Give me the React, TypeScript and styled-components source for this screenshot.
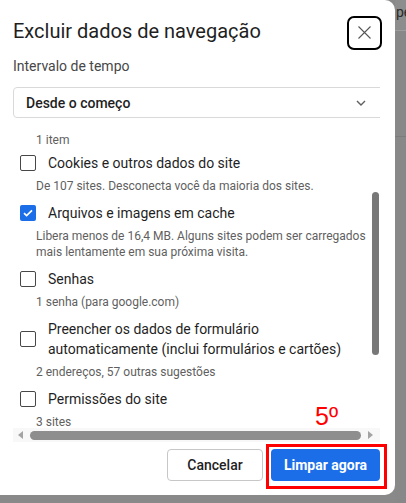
import React from 'react';
import styled, { createGlobalStyle } from 'styled-components';

type Entry = { label: string[]; hint: string[]; checked?: boolean };

const ENTRIES: Entry[] = [
  { label: ['Cookies e outros dados do site'], hint: ['De 107 sites. Desconecta você da maioria dos sites.'] },
  {
    label: ['Arquivos e imagens em cache'],
    hint: ['Libera menos de 16,4 MB. Alguns sites podem ser carregados', 'mais lentamente em sua próxima visita.'],
    checked: true,
  },
  { label: ['Senhas'], hint: ['1 senha (para google.com)'] },
  {
    label: ['Preencher os dados de formulário', 'automaticamente (inclui formulários e cartões)'],
    hint: ['2 endereços, 57 outras sugestões'],
  },
  { label: ['Permissões do site'], hint: ['3 sites'] },
];

const lines = (parts: string[]) =>
  parts.map((p, i) => (
    <React.Fragment key={i}>
      {i > 0 && <br />}
      {p}
    </React.Fragment>
  ));

const App: React.FC = () => {
  return (
    <Screen>
      <GlobalStyle />
      <Dialog>
        <Header>
          <Title>Excluir dados de navegação</Title>
          <CloseButton aria-label="Fechar">
            <svg width="13" height="13" viewBox="0 0 13 13">
              <path d="M0.5 0.5L12.5 12.5M12.5 0.5L0.5 12.5" stroke="#555" strokeWidth="1.1" fill="none" />
            </svg>
          </CloseButton>
        </Header>
        <RangeLabel>Intervalo de tempo</RangeLabel>
        <Frame>
          <Select>
            <SelectText>Desde o começo</SelectText>
            <svg width="10" height="6" viewBox="0 0 10 6">
              <path d="M1 1l4 4 4-4" stroke="#5f5f5f" strokeWidth="1.4" fill="none" />
            </svg>
          </Select>
          <ListArea>
            <ListViewport>
              <ScrollContent $offset={8}>
                <Hint>1 item</Hint>
                {ENTRIES.map((e, i) => (
                  <Item key={i}>
                    <Row>
                      <Box $checked={!!e.checked}>
                        {e.checked && (
                          <svg width="10" height="8" viewBox="0 0 10 8">
                            <path d="M1 4.2l2.6 2.4L9 1.3" stroke="#fff" strokeWidth="1.7" fill="none" />
                          </svg>
                        )}
                      </Box>
                      <Label>{lines(e.label)}</Label>
                    </Row>
                    <Hint>{lines(e.hint)}</Hint>
                  </Item>
                ))}
              </ScrollContent>
            </ListViewport>
            <VTrack>
              <VThumb style={{ marginTop: 57, height: 163 }} />
            </VTrack>
          </ListArea>
          <HScroll>
            <Arrow $dir="left" />
            <HThumb />
            <Arrow $dir="right" />
          </HScroll>
        </Frame>
        <Footer>
          <Button $width={96}>Cancelar</Button>
          <Annotated>
            <Button $width={109} $primary>
              Limpar agora
            </Button>
            <StepMark>5º</StepMark>
          </Annotated>
        </Footer>
      </Dialog>
      <Backdrop>
        <BackdropTab>pe</BackdropTab>
        <BackdropRule />
      </Backdrop>
    </Screen>
  );
};

export default App;

const GlobalStyle = createGlobalStyle`
  html, body {
    margin: 0;
    padding: 0;
    background: #898989;
  }
  body {
    font-family: Roboto, "Noto Sans", sans-serif;
  }
`;

const Screen = styled.div`
  display: flex;
  align-items: flex-start;
  height: 503px;
  overflow: hidden;
`;

const Dialog = styled.section`
  flex: 0 0 395px;
  height: 495px;
  box-sizing: border-box;
  background: #fff;
  border-radius: 0 10px 10px 0;
  padding: 15px 15px 0 13px;
  display: flex;
  flex-direction: column;
`;

const Header = styled.div`
  display: flex;
  align-items: center;
  justify-content: space-between;
  height: 35px;
`;

const Title = styled.h1`
  margin: -3px 0 0;
  font-size: 20px;
  line-height: 24px;
  font-weight: 400;
  color: #1f1f1f;
`;

const CloseButton = styled.button`
  width: 35px;
  height: 34px;
  margin-right: -2px;
  padding: 0;
  box-sizing: border-box;
  border: 2px solid #000;
  border-radius: 7px;
  background: #fff;
  display: grid;
  place-items: center;
`;

const RangeLabel = styled.div`
  margin-top: 6px;
  font-size: 14px;
  line-height: 20px;
  color: #474747;
`;

const Frame = styled.div`
  margin-top: 11px;
  overflow: hidden;
`;

const Select = styled.div`
  width: calc(100% + 24px);
  height: 31px;
  box-sizing: border-box;
  border: 1px solid #d9d9d9;
  border-radius: 4px;
  display: flex;
  align-items: center;
  padding: 0 37px 0 12px;
`;

const SelectText = styled.span`
  flex: 1;
  font-size: 14px;
  font-weight: 500;
  color: #1f1f1f;
`;

const ListArea = styled.div`
  margin-top: 17px;
  height: 293px;
  display: flex;
`;

const ListViewport = styled.div`
  flex: 1;
  overflow: hidden;
`;

const ScrollContent = styled.div<{ $offset: number }>`
  transform: translateY(-${p => p.$offset}px);
  padding-left: 23px;
`;

const Item = styled.div`
  padding: 4px 0;
`;

const Row = styled.div`
  display: flex;
  align-items: center;
  gap: 12px;
  margin-left: -16px;
`;

const Box = styled.span<{ $checked: boolean }>`
  flex: 0 0 16px;
  height: 16px;
  box-sizing: border-box;
  border-radius: 2px;
  border: ${p => (p.$checked ? 'none' : '1.5px solid #474747')};
  background: ${p => (p.$checked ? '#1b6ee8' : '#fff')};
  display: grid;
  place-items: center;
`;

const Label = styled.span`
  font-size: 14px;
  line-height: 20px;
  color: #1f1f1f;
`;

const Hint = styled.div`
  margin-top: 5px;
  font-size: 12px;
  line-height: 16.75px;
  color: #5f5f5f;
  white-space: nowrap;
`;

const VTrack = styled.div`
  flex: 0 0 9px;
  display: flex;
  flex-direction: column;
  align-items: center;
`;

const VThumb = styled.div`
  width: 7px;
  border-radius: 4px;
  background: #787878;
`;

const HScroll = styled.div`
  height: 14px;
  background: #f8f8f8;
  display: flex;
  align-items: center;
  gap: 7px;
  padding: 0 7px 0 5px;
`;

const Arrow = styled.span<{ $dir: 'left' | 'right' }>`
  width: 0;
  height: 0;
  border-top: 4px solid transparent;
  border-bottom: 4px solid transparent;
  ${p => (p.$dir === 'left' ? 'border-right: 5px solid #a3a3a3;' : 'border-left: 5px solid #a3a3a3;')}
`;

const HThumb = styled.div`
  flex: 1;
  height: 9px;
  border-radius: 5px;
  background: #8e8e8e;
`;

const Footer = styled.div`
  margin-top: 7px;
  display: flex;
  justify-content: flex-end;
  gap: 8px;
`;

const Button = styled.button<{ $primary?: boolean; $width: number }>`
  width: ${p => p.$width}px;
  height: 32px;
  padding: 0;
  box-sizing: border-box;
  border-radius: 4px;
  font-family: Roboto, "Noto Sans", sans-serif;
  font-size: 14px;
  font-weight: ${p => (p.$primary ? 700 : 500)};
  color: ${p => (p.$primary ? '#fff' : '#1f1f1f')};
  background: ${p => (p.$primary ? '#1b6ee8' : '#fff')};
  border: ${p => (p.$primary ? 'none' : '1px solid #c7c7c7')};
  display: block;
`;

const Annotated = styled.div`
  position: relative;
  &::after {
    content: '';
    position: absolute;
    inset: -5px -7px -8px -5px;
    border: 3px solid #f00;
    pointer-events: none;
  }
`;

const StepMark = styled.span`
  position: absolute;
  left: 44px;
  top: -46px;
  font-family: "Liberation Sans", Arial, sans-serif;
  font-size: 25px;
  line-height: 26px;
  color: #f00;
`;

const Backdrop = styled.aside`
  flex: 1;
  align-self: stretch;
  display: flex;
  flex-direction: column;
  background: #888;
`;

const BackdropTab = styled.div`
  height: 30px;
  border-bottom: 1px solid #9d9d9d;
  background: #8d8d8d;
  font-size: 14px;
  line-height: 24px;
  color: #2a2a2a;
  white-space: nowrap;
  overflow: hidden;
  padding-left: 1px;
`;

const BackdropRule = styled.div`
  margin-top: 105px;
  height: 1px;
  background: #7c7c7c;
`;
